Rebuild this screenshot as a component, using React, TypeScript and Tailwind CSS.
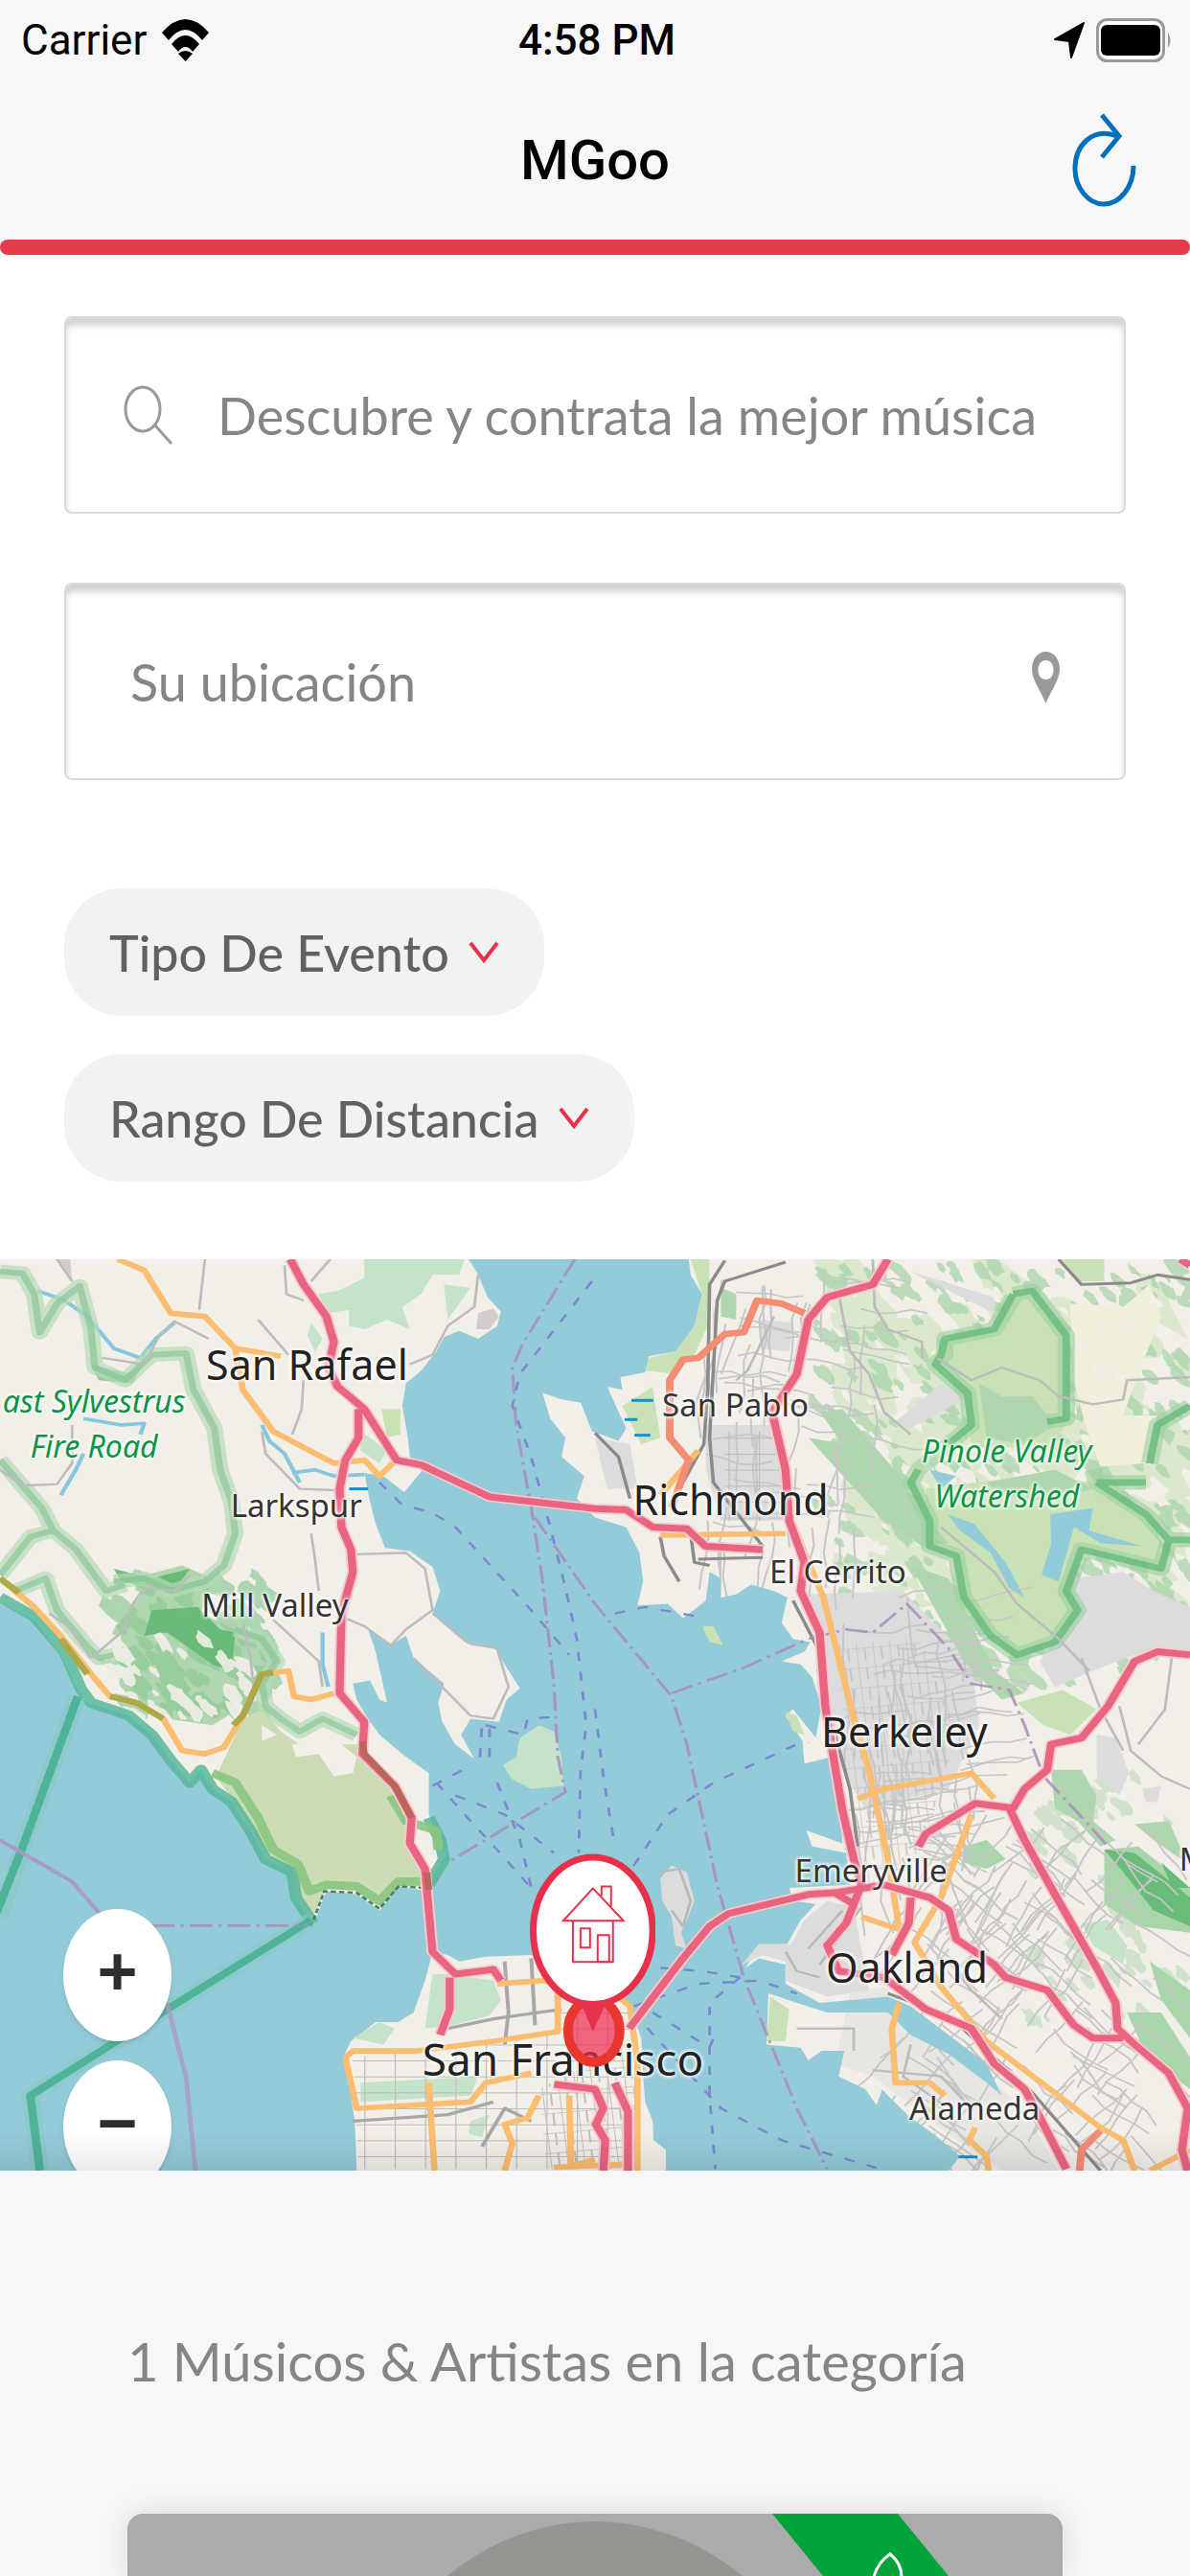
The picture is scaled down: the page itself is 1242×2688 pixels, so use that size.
import { useState } from 'react';

interface RoadSet {
    color: string;
    width: number;
    casing?: string;
    lines: string[];
}

interface PlaceLabel {
    text: string;
    left: string;
    top: string;
    size: 'capital' | 'city' | 'town' | 'park';
}

const WATER = '#94cbd9';
const LAND = '#f2efe9';

// Small deterministic generator so the terrain looks the same on every render
function makeRandom(seed: number) {
    let s = seed;
    return () => {
        s = (s * 16807) % 2147483647;
        return s / 2147483647;
    };
}

function makeBlotches(seed: number, count: number, x: number, y: number, w: number, h: number, size: number) {
    const rnd = makeRandom(seed);
    return Array.from({ length: count }, () => {
        const cx = x + rnd() * w;
        const cy = y + rnd() * h;
        const r = size * (0.4 + rnd());
        const points = Array.from({ length: 11 }, (_, i) => {
            const a = (i / 11) * Math.PI * 2;
            const d = r * (0.6 + rnd() * 0.6);
            const px = Math.cos(a) * d * 0.8;
            const py = Math.sin(a) * d * 1.2;
            return `${Math.round(cx + px + py * 0.5)},${Math.round(cy + py)}`;
        });
        return points.join(' ');
    });
}

// Streets mostly keep to two directions, tilt is the slant of the first one
function makeStreets(seed: number, count: number, x: number, y: number, w: number, h: number, tilt: number) {
    const rnd = makeRandom(seed);
    return Array.from({ length: count }, () => {
        let px = x + rnd() * w;
        let py = y + rnd() * h;
        const base = tilt + (rnd() > 0.5 ? Math.PI / 2 : 0);
        const points = [`${Math.round(px)},${Math.round(py)}`];
        for (let i = 0; i < 4; i++) {
            const a = base + (rnd() - 0.5) * 0.6;
            px += Math.cos(a) * 45;
            py += Math.sin(a) * 55;
            points.push(`${Math.round(px)},${Math.round(py)}`);
        }
        return points.join(' ');
    });
}

const BAY =
    '1235,41 1260,90 1285,160 1320,205 1310,250 1260,290 1210,265 1170,285 1150,330 1110,390 1070,430 1060,500 1075,600 1080,660 1115,700 1065,770 1010,720 960,710 975,800 990,870 1015,945 1080,955 1140,1005 1160,1080 1140,1150 1200,1215 1240,1250 1305,1260 1330,1310 1370,1385 1335,1420 1315,1490 1240,1480 1215,1530 1250,1605 1200,1560 1165,1490 1155,1430 1170,1370 1090,1290 1070,1220 1030,1250 970,1200 990,1270 1020,1430 1000,1420 975,1360 930,1370 940,1420 970,1480 1000,1530 1060,1590 1130,1650 1130,1780 1160,1860 1175,1910 1150,1950 1130,2020 1050,2005 1000,2080 940,2030 860,2020 825,2130 780,2040 770,1960 700,1920 660,1830 610,1740 560,1700 530,1640 500,1680 450,1610 400,1530 340,1470 230,1430 200,1380 160,1280 90,1170 0,1120 0,2895 940,2895 935,2740 908,2530 925,2490 990,2430 1050,2430 1090,2400 1120,2300 1140,2210 1180,2220 1210,2240 1280,2225 1400,2220 1500,2260 1600,2330 1660,2380 1690,2480 1695,2600 1700,2680 1720,2740 1722,2800 1755,2830 1755,2895 2500,2895 2530,2850 2460,2780 2400,2730 2340,2660 2325,2640 2310,2690 2280,2640 2210,2600 2225,2520 2165,2520 2130,2550 2110,2510 2020,2500 2025,2340 2100,2370 2180,2400 2340,2400 2400,2470 2500,2530 2600,2620 2640,2660 2600,2560 2500,2470 2400,2380 2340,2350 2160,2370 2070,2310 2070,2250 2000,2230 1965,2260 2000,2190 2075,2185 2110,2110 2150,2060 2090,2050 2080,2010 2240,2000 2230,1900 2140,1880 2125,1830 2220,1870 2210,1700 2190,1600 2120,1620 2115,1550 2070,1470 2090,1450 2150,1540 2165,1440 2140,1350 2110,1310 2060,1300 2120,1270 2135,1240 2090,1230 2060,1180 2075,1100 2040,1080 1980,1060 1940,1090 1900,1100 1900,1040 1870,1020 1860,1110 1800,1165 1760,1120 1680,1125 1695,1050 1685,960 1650,880 1568,850 1520,790 1540,720 1480,660 1490,600 1450,540 1430,460 1480,480 1530,490 1560,580 1630,610 1650,570 1600,440 1640,450 1635,410 1700,395 1710,345 1780,330 1830,250 1850,150 1820,90 1815,41';

const WATERWAYS = [
    '100,140 170,170 230,220 300,320 370,350 410,290 460,240',
    '220,540 320,560 380,555 370,590',
    '160,780 200,700 220,650',
    '770,710 830,700 880,720 960,715',
    '690,560 710,610 750,650 790,740',
    '850,1210 850,1310 865,1380',
];

const PARK_EDGES = [
    '0,80 60,85 90,150 105,270 150,180 210,125 240,260 250,380 330,420 400,340 490,335 510,450 565,570 580,700 610,800 620,900 590,1000 540,1050 450,1080 380,1040 300,1050',
    '0,670 110,820 140,890 200,950 280,1080 330,1060',
    '0,1030 80,910 140,890',
    '40,1080 120,1040 150,1140 220,1240 260,1290 300,1280',
    '620,1200 690,1230 730,1300 690,1370 700,1440 740,1480 790,1520 850,1480 940,1530',
];

const STREETS = [
    '540,41 525,200', '150,41 190,110', '680,230 760,340', '750,60 755,150 800,170', '870,41 820,110',
    '1260,90 1250,190 1180,250 1140,340 1080,370', '800,420 795,510 770,590', '270,350 380,370 420,280 460,235 550,290',
    '690,580 700,650 790,760 900,765', '0,700 60,750 150,745 190,680 190,560', '820,900 830,980 840,1080', '940,965 1070,960 1120,1010 1140,1140 1070,1200 1030,1250 960,1190 900,1160',
    '1140,1150 1230,1240 1310,1260 1340,1380 1300,1480 1240,1470 1090,1290', '640,1180 660,1290 670,1400', '720,1170 840,1300 850,1380',
    '240,1290 320,1210 350,1120 380,1070 460,1080 500,1030', '130,1150 180,1190 240,1290',
    '2300,41 2305,190 2340,260 2430,300 2430,350', '2210,150 2240,330 2290,400 2330,520 2400,590', '2040,220 1970,390 1940,420', '2470,350 2560,420 2640,380 2740,420 2790,470 2880,495 2960,480 2970,420 3136,410',
    '2480,880 2620,1020 2680,1120 2790,1230 2870,1330', '2850,1290 2900,1450 2960,1580', '3090,1270 3070,1450 3000,1560', '2950,1440 2980,1580 3060,1660 3136,1700',
    '2500,2240 2560,2330 2640,2420', '2400,2500 2380,2600 2500,2700', '2100,2450 2250,2450 2250,2520', '2300,2580 2480,2600 2560,2700',
];

const FERRIES = [
    '1560,110 1370,400 1350,500 1400,660 1450,880 1490,1070 1520,1230 1545,1500 1530,1640 1525,1900',
    '1000,740 1060,810 1140,835 1200,880 1300,1010 1400,1140 1500,1280',
    '1280,1500 1380,1530 1390,1480 1450,1475', '1265,1600 1270,1500', '1290,1600 1290,1500',
    '1140,1690 1220,1640', '1150,1680 1240,1800 1310,1890 1400,2010', '1200,1720 1330,1780 1460,1900', '1310,1680 1370,1860 1400,2010',
    '1568,1450 1590,1660 1620,1880', '1670,1940 1760,1780 1880,1680 2100,1560 2130,1555', '1630,2350 1900,2700 2060,2800 2320,2890',
    '1670,2380 1840,2310 2000,2300 2100,2340', '1720,2400 1870,2510 1880,2480', '1950,2290 1870,2370 1870,2660 1885,2890', '1740,2260 1850,2270 1950,2290', '1620,1150 1700,1130 1840,1160',
];

const BORDERS = [
    '1515,41 1380,300 1350,380 1360,560 1400,820 1430,1050 1460,1380 1470,1600 1490,1710 1180,1930',
    '1410,850 1568,1120 1770,1410 1810,1560 1890,2000 1960,2290 2100,2700 2180,2890',
    '1770,1400 1960,1320 2130,1230 2230,1200 2300,1210 2390,1120 2500,1260 2560,1370 2660,1390 2700,1500 2750,1660 2860,1800 2920,1880',
    '0,1860 190,1990 270,2100', '400,2128 810,2128',
];

const ROADS: RoadSet[] = [
    {
        color: '#fbbd6f',
        width: 17,
        lines: [
            '310,41 380,75 450,210 540,220 620,320 740,345',
            '620,320 640,450 720,580 880,680 960,670 1000,720 1035,680',
            '0,1040 90,1130 160,1220 240,1340 290,1410 360,1430 430,1480 480,1580 540,1590 590,1570 640,1470 690,1340 760,1330 775,1410 820,1420 880,1400',
            '1740,905 2070,900', '2080,840 2120,960 2170,1100 2250,1480 2290,1640 2340,1920 2370,2140 2270,2100',
            '2260,1730 2330,1700 2560,1650 2620,1730', '2560,1780 2480,2040 2410,2180 2480,2320 2600,2490 2900,2760 2960,2800 2990,2895',
            '2370,2370 2350,2450 2360,2620 2450,2620 2490,2660', '2570,2760 2555,2800 2600,2850 2605,2895', '3136,2830 3030,2895',
            '910,2540 930,2520 1100,2520 1300,2490 1470,2460 1470,2300', '910,2540 940,2700 1240,2680 1280,2620 1400,2590', '1130,2620 1145,2895',
            '1420,2660 1390,2730 1330,2750 1350,2810 1330,2895', '1310,2310 1430,2300 1600,2320 1660,2380 1680,2560 1680,2895', '1500,2660 1505,2880 1568,2860', '1460,2885 1640,2875', '1840,640 1740,780',
        ],
    },
    {
        color: '#f58c74',
        width: 20,
        lines: ['2120,210 2060,180 1995,170 1960,270 1910,275 1840,350 1800,355 1765,420 1765,600 1815,670 1770,820', '2900,2770 2850,2830 2845,2895'],
    },
    {
        color: '#e9647f',
        width: 21,
        casing: '#f7c9d0',
        lines: [
            '765,41 800,120 860,220 880,300 865,380 890,440 960,510 1045,670 1110,685 1290,785 1568,822 1650,826 1720,880 1810,885 1860,940 2010,950',
            '945,510 945,600 910,670 895,760 900,880 925,950 930,1020 900,1150 895,1400 960,1490 955,1590 1040,1690 1085,1790 1080,1870 1120,1950 1130,2080 1140,2210 1200,2280 1300,2265 1320,2300',
            '1185,2290 1185,2390 1160,2470',
            '2340,41 2300,120 2180,160 2130,230 2100,400 2035,520 2070,700 2080,860 2120,990 2110,1080 2160,1210 2175,1440 2195,1590 2220,1765 2250,1920 2270,2000 2230,2120 2180,2190 2210,2270 2330,2290 2440,2390 2560,2450 2620,2560 2700,2640 2750,2750 2810,2890',
            '1658,2450 1800,2230 1870,2130 1920,2090 2130,2030 2200,2025 2250,2060', '2200,2025 2330,2000 2450,2040 2500,2080 2520,2170 2620,2250 2650,2290 2760,2330 2830,2440 2880,2480 2960,2480',
            '2420,1880 2440,1840 2570,1745 2670,1760 2700,1700 2760,1640 2770,1560 2850,1540 2920,1440 2990,1300 3050,1270 3136,1280',
            '2660,1760 2700,1860 2780,2030 2900,2280 2940,2370 2945,2450 2990,2500 3080,2590 3130,2700 3115,2830 3130,2895',
            '2400,2040 2395,2120 2350,2220', '1460,2625 1568,2640 1590,2700 1570,2750 1595,2800 1590,2895', '1620,2620 1655,2710 1655,2895',
            '3110,41 3136,60',
        ],
    },
];

const RAILS = [
    '1910,45 1870,120 1865,450 1855,620 1800,740', '2070,50 1910,110 1890,170 1870,600 1880,740 2010,940', '1568,585 1630,660 1660,790', '1840,980 2010,975', '1740,910 1750,970 1790,1050',
    '2090,1110 2160,1270 2180,1440 2240,1700 2260,1880', '2340,2340 2500,2410 2620,2540 2720,2650 2900,2895', '2790,41 2850,120 2980,115 3050,90 3136,105', '1820,900 1830,990 1870,1000',
];

const LABELS: PlaceLabel[] = [
    { text: 'San Francisco', left: 'left-[47.3%]', top: 'top-[87.7%]', size: 'capital' },
    { text: 'San Rafael', left: 'left-[25.8%]', top: 'top-[11.6%]', size: 'city' },
    { text: 'Richmond', left: 'left-[61.4%]', top: 'top-[26.4%]', size: 'city' },
    { text: 'Berkeley', left: 'left-[76%]', top: 'top-[51.8%]', size: 'city' },
    { text: 'Oakland', left: 'left-[76.2%]', top: 'top-[77.7%]', size: 'city' },
    { text: 'San Pablo', left: 'left-[61.8%]', top: 'top-[16%]', size: 'town' },
    { text: 'Larkspur', left: 'left-[24.9%]', top: 'top-[27%]', size: 'town' },
    { text: 'Mill Valley', left: 'left-[23.1%]', top: 'top-[38%]', size: 'town' },
    { text: 'El Cerrito', left: 'left-[70.4%]', top: 'top-[34.3%]', size: 'town' },
    { text: 'Emeryville', left: 'left-[73.2%]', top: 'top-[67.1%]', size: 'town' },
    { text: 'Alameda', left: 'left-[81.9%]', top: 'top-[93.2%]', size: 'town' },
    { text: 'M', left: 'left-[100.3%]', top: 'top-[65.8%]', size: 'town' },
    { text: 'ast Sylvestrus Fire Road', left: 'left-[7.9%]', top: 'top-[18%]', size: 'park' },
    { text: 'Pinole Valley Watershed', left: 'left-[84.6%]', top: 'top-[23.4%]', size: 'park' },
];

const LABEL_STYLES = {
    capital: 'text-[46px] leading-[48px] whitespace-nowrap text-[#222]',
    city: 'text-[43px] leading-[48px] whitespace-nowrap text-[#222]',
    town: 'text-[33px] leading-[40px] whitespace-nowrap text-[#333]',
    park: 'w-[210px] text-center text-[32px] leading-[47px] italic text-[#0b9444]',
};

const FORESTS = makeBlotches(71, 420, 2150, 60, 986, 1300, 24);
const MEADOWS = makeBlotches(23, 110, 2200, 60, 920, 1150, 70);
const CLEARINGS = makeBlotches(5, 130, 2180, 60, 950, 1200, 18);
const HILLS = makeBlotches(91, 60, 2720, 1640, 416, 800, 24);
const MARIN = makeBlotches(17, 90, 300, 1040, 420, 420, 30);
const MARIN_CLEARINGS = makeBlotches(37, 36, 280, 1220, 380, 260, 24);
const BERKELEY_STREETS = makeStreets(11, 90, 2220, 1100, 340, 850, -0.1);
const OAKLAND_STREETS = makeStreets(29, 150, 2360, 1780, 680, 1080, 0.7);
const RICHMOND_STREETS = makeStreets(43, 70, 1860, 60, 460, 900, 0.1);

function Lines({ lines, color, width, dash, opacity }: { lines: string[]; color: string; width: number; dash?: string; opacity?: number }) {
    return (
        <g fill="none" stroke={color} strokeWidth={width} strokeDasharray={dash} opacity={opacity} strokeLinejoin="round">
            {lines.map(points => (
                <polyline key={points} points={points} />
            ))}
        </g>
    );
}

function Shapes({ shapes, color, opacity }: { shapes: string[]; color: string; opacity?: number }) {
    return (
        <g fill={color} opacity={opacity}>
            {shapes.map(points => (
                <polygon key={points} points={points} />
            ))}
        </g>
    );
}

function BayMap() {
    return (
        <svg viewBox="0 41 3136 2854" preserveAspectRatio="none" className="block h-full w-full" aria-hidden="true">
            <defs>
                <pattern id="grid" width="44" height="62" patternUnits="userSpaceOnUse" patternTransform="rotate(-6)">
                    <path d="M0 0H44M0 0V62M22 0V40" fill="none" stroke="#bdbdbd" strokeWidth="5" />
                </pattern>
                <pattern id="blocks" width="80" height="50" patternUnits="userSpaceOnUse">
                    <path d="M0 0H80M0 0V50" fill="none" stroke="#bbb" strokeWidth="6" />
                </pattern>
            </defs>
            <rect y="41" width="3136" height="2854" fill={LAND} />

            {/* Marin */}
            <Shapes
                color="#c5e3c8"
                shapes={[
                    '960,41 1225,41 1210,90 1140,90 1110,150 1060,190 1080,260 1020,230 960,260 920,250 920,200 860,210 840,150 890,140 960,100',
                    '1170,120 1240,130 1180,230',
                    '950,580 1020,640 1000,680 950,640',
                    '820,240 850,290 830,330 810,280',
                ]}
            />
            <Shapes color="#c8e2b2" shapes={['1005,510 1055,510 1055,590 1020,600']} />
            <Shapes color="#d3cccc" shapes={['1260,210 1300,195 1315,220 1290,260 1255,260', '150,41 185,41 190,110']} />
            <Shapes color="#afd6ae" shapes={['300,1020 350,1040 480,1000 560,1040 530,1150 620,1200 700,1220 740,1290 680,1340 640,1440 560,1500 440,1480 380,1420 260,1300 300,1200 380,1080']} />
            <Shapes color="#8fcb98" opacity={0.7} shapes={MARIN} />
            <Shapes color="#63b873" opacity={0.9} shapes={['400,1140 520,1130 580,1200 620,1210 610,1330 560,1310 440,1210 380,1220', '300,1010 400,1040 500,1010 460,1080 320,1050']} />
            <Shapes color="#f2efe9" opacity={0.9} shapes={MARIN_CLEARINGS} />
            <Shapes color="#8fcb97" shapes={['240,370 340,400 380,360 350,430 260,420']} />
            <Shapes color="#cbdcb5" shapes={['640,1480 690,1450 740,1520 790,1560 870,1560 950,1560 1040,1700 1080,1800 1080,1880 1120,1960 1110,2005 1050,2005 1000,2070 940,2020 860,2010 825,2100 780,2040 760,1960 700,1900 640,1780 570,1660']} />
            <Shapes color={LAND} shapes={['770,1560 850,1545 900,1560 940,1600 930,1650 880,1660 840,1590 780,1600', '1105,1850 1140,1880 1120,1920 1095,1890', '690,1500 730,1530 690,1550']} />

            {/* East Bay */}
            <Shapes color="#cbe3b8" shapes={MEADOWS} opacity={0.55} />
            <Shapes color="#a9d5ab" shapes={FORESTS} opacity={0.75} />
            <Shapes color="#f1efdc" shapes={['2820,180 2960,190 3030,120 3060,220 3000,400 2960,530 3050,530 3020,680 2900,690 2860,560 2830,420']} />
            <Shapes color="#f2efe9" shapes={CLEARINGS} />
            <Shapes color="#dcdcdc" shapes={['1860,560 2060,560 2080,700 2080,860 1900,860 1860,700', '1568,600 1660,620 1680,760 1600,760', '2000,230 2090,240 2080,330 2010,320', '2130,1090 2380,1080 2560,1300 2580,1500 2500,1700 2280,1760 2200,1600', '2830,1040 2960,1020 3040,1080 3136,1130 3136,1270 2990,1280 2880,1330 2780,1380 2740,1300 2830,1150', '2480,430 2540,480 2400,570 2360,550', '2400,80 2620,160 2620,210 2450,110']} />
            <Shapes color="#c8e2b6" shapes={['1820,41 1870,41 1865,250 1830,340 1780,400 1700,390 1710,350 1780,330 1830,250 1850,150', '1640,500 1720,440 1740,600 1690,620', '2660,160 2700,140 2810,300 2810,560 2760,640 2560,620 2550,540 2550,460 2470,350 2490,290 2620,260', '2440,760 2700,720 2880,740 3050,860 3060,1000 2850,950 2800,1080 2840,1150 2780,1240 2680,1280 2560,1160 2520,960 2440,880', '2800,41 2910,41 2910,110 2840,110', '2680,1430 2800,1390 2890,1450 2820,1530 2750,1500']} />
            <Shapes color="#afd6ae" shapes={['1900,130 1940,150 1940,230 1900,220', '2580,430 2640,470 2720,470 2780,560 2700,620 2600,600', '2600,740 2780,700 2880,760 2760,800 2640,780', '2130,600 2230,620 2380,760 2500,930 2430,940 2330,860', '2160,520 2220,510 2400,760 2320,780', '2400,1000 2500,1040 2620,1330 2700,1400 2640,1420 2540,1300']} />
            <Shapes color="#f2efe9" shapes={['2840,1530 2900,1450 3000,1300 3136,1300 3136,1830 2980,1800 2880,1640']} />
            <Shapes color="#afd6ae" shapes={HILLS} opacity={0.5} />
            <Shapes color="#afd6ae" shapes={['2770,1640 2850,1640 2890,1720 2880,1800 2940,1860 2900,1880 2840,1800 2780,1760', '2990,1810 3080,1800 3110,1880 3136,1940 3040,1860']} />
            <Shapes color="#dcdcdc" shapes={['2890,1530 2940,1540 2975,1650 2950,1720 2890,1660', '3010,1700 3060,1690 3050,1740 3020,1740']} />
            <Shapes color="#a9d5ab" shapes={['2910,1890 3000,1880 3136,2010 3136,2150 3000,2130 2910,2060', '3030,2240 3136,2330 3136,2480 3060,2360', '2540,1880 2600,1860 2650,1920 2600,1950 2540,1930', '2970,2400 3060,2400 3136,2540 3136,2640 3020,2530']} />
            <Shapes color="#68bb78" shapes={['2910,1890 2990,1900 3136,2040 3136,2130 3040,2080 2960,1960', '3060,1930 3136,2010 3090,2010']} />
            <Shapes color="#c5e3c8" shapes={['2850,2120 2920,2110 2970,2190 2960,2250 2880,2190']} />

            <Shapes color="#d9d9d9" shapes={['2240,2340 2330,2320 2620,2620 2700,2700 2790,2895 2640,2895 2500,2780 2300,2600 2200,2560']} opacity={0.4} />
            <Lines lines={BERKELEY_STREETS} color="#c6c6c6" width={5} />
            <Lines lines={OAKLAND_STREETS} color="#c6c6c6" width={5} />
            <Lines lines={RICHMOND_STREETS} color="#c6c6c6" width={5} />
            <polygon points="2200,1250 2420,1230 2520,1500 2480,1700 2420,1900 2280,2000 2230,1640" fill="url(#grid)" opacity="0.7" />
            <polygon points="1910,580 2050,580 2070,860 1910,860" fill="url(#blocks)" />

            {/* Water */}
            <polygon points={BAY} fill={WATER} />
            <Shapes color={WATER} shapes={['2498,840 2568,870 2650,990 2700,1100 2660,1070 2610,960 2530,890', '2768,840 2880,820 2870,890 3010,940 2900,930 2830,880 2790,1050 2745,1030 2770,930', '2450,700 2520,720 2480,760']} />
            <Lines lines={WATERWAYS} color="#83c8df" width={11} />

            {/* Islands, docks and Alameda */}
            <Shapes color="#c5e3c8" shapes={['1420,1500 1460,1520 1480,1600 1485,1690 1400,1700 1350,1670 1325,1625 1360,1600 1370,1540']} />
            <Shapes color="#dcdcdc" shapes={['1740,1980 1770,1940 1810,1960 1830,2050 1810,2110 1795,2150 1810,2200 1780,2190 1770,2100 1745,2050', '1955,2250 2000,2185 2085,2185 2120,2110 2180,2050 2250,2070 2290,2330 2180,2350 2070,2300 2070,2240 2010,2220']} />
            <Shapes color="#c8e2b6" shapes={['1850,1190 1880,1190 1905,1250 1870,1240', '2030,2350 2080,2390 2070,2490 2020,2490', '2070,1460 2100,1470 2120,1530 2090,1520']} />
            <Lines lines={['1740,1960 1790,1950 1820,2050 1800,2130 1770,2080', '2220,2080 2130,2200', '2270,2070 2160,2250', '2070,2210 2100,2270 2160,2290']} color="#b8b8b8" width={7} />

            {/* San Francisco */}
            <Shapes color="#c5e3c8" shapes={['1140,2280 1180,2280 1300,2300 1320,2360 1290,2410 1190,2440 1120,2450', '930,2480 1000,2430 1040,2450 1010,2500', '950,2620 1260,2600 1240,2660 950,2680', '1240,2740 1290,2720 1270,2790 1235,2780']} />
            <polygon points="930,2540 1290,2500 1460,2470 1460,2320 1600,2340 1660,2400 1680,2890 945,2890" fill="url(#blocks)" />
            <polygon points="1420,2640 1660,2500 1690,2890 1440,2890" fill="url(#grid)" />
            <Lines lines={['930,2740 1180,2720 1300,2680', '1180,2450 1300,2420 1480,2390', '1330,2240 1340,2400 1330,2500', '1400,2230 1410,2440', '1270,2820 1330,2700 1400,2740']} color="#a8a8a8" width={10} />

            {/* Protected coast line */}
            <Lines lines={PARK_EDGES} color="#b5dbb8" width={44} opacity={0.7} />
            <Lines lines={PARK_EDGES} color="#83c393" width={18} opacity={0.6} />
            <Lines
                color="#57b79b"
                width={32}
                opacity={0.85}
                lines={['0,1100 90,1160 170,1270 215,1390 240,1430 340,1470 400,1530 450,1610 500,1680 530,1640 560,1700 610,1740 660,1830 700,1920 770,1960 780,2040 825,2120', '1130,2000 1170,1920 1160,1860 1130,1790']}
            />
            <Lines color="#8ac681" width={26} opacity={0.9} lines={['560,1650 620,1680 680,1790 720,1890 785,1935 815,2020 860,2000 940,2005 1000,2050 1050,1990 1110,1990', '1030,1720 1070,1800 1150,1830 1155,1890']} />
            <Lines color="#477f60" width={7} dash="14 8" lines={['820,2130 855,2020 940,2025 1000,2075 1050,2005 1130,2010']} />
            <Lines lines={['205,1410 60,1880 0,2100', '820,2110 440,2390 80,2660 105,2895']} color="#86c9c4" width={46} opacity={0.6} />
            <Lines lines={['205,1410 60,1880 -10,2090', '820,2110 440,2390 80,2660 105,2895']} color="#4fb397" width={22} />
            <Lines
                color="#9bd0a0"
                width={46}
                opacity={0.6}
                lines={['2670,160 2620,260 2490,290 2490,340 2465,370 2550,460 2560,560 2500,620 2420,700 2400,740 2450,860 2450,940 2520,970 2540,1100 2610,1220 2680,1280 2780,1240 2840,1140 2810,1080 2850,950 3060,1010 3080,920 3020,840 2890,740 2880,700', '2670,150 2720,140 2810,280 2810,540 2760,550', '3136,500 3050,560 3030,680', '2890,740 3020,740', '3080,920 3136,920']}
            />
            <Lines
                color="#6cbd7e"
                width={20}
                opacity={0.85}
                lines={['2670,150 2620,260 2490,290 2480,340 2465,370 2550,460 2560,560 2500,620', '2420,700 2400,740 2450,860 2450,940 2520,970 2540,1100 2610,1220 2680,1280 2780,1240 2840,1140 2810,1080 2850,950 3060,1010 3080,920 3020,840 2890,740', '2670,150 2720,140 2810,280 2810,540 2760,550', '3136,500 3050,560 3030,680', '2890,740 3020,740', '3080,920 3136,920']}
            />

            <Lines lines={STREETS} color="#bcbcbc" width={7} />
            <Lines lines={RAILS} color="#8b8b8b" width={9} />
            <Lines lines={FERRIES} color="#7a88d2" width={7} dash="28 34" />
            <Lines lines={BORDERS} color="#a98fb8" width={8} dash="60 16 8 16" opacity={0.85} />
            <Lines lines={['440,2370 490,2600 515,2895', '0,1860 190,1990 270,2100']} color="#a99bc0" width={12} opacity={0.8} />
            {ROADS.map(road => (
                <g key={road.color}>
                    {road.casing && <Lines lines={road.lines} color={road.casing} width={road.width + 10} />}
                    <Lines lines={road.lines} color={road.color} width={road.width} />
                </g>
            ))}
            <Lines lines={['0,1040 50,1085', '160,1230 230,1340', '290,1410 360,1430 430,1480', '615,1500 640,1470 690,1340 720,1335']} color="#ada94b" width={18} />
            <Lines lines={['955,1550 960,1590 1040,1690 1085,1790', '1125,1960 1130,2015']} color="#b9675c" width={18} />
            <Lines lines={['920,760 970,760', '1664,483 1722,483', '1646,543 1680,543', '1672,592 1714,592', '2526,2852 2576,2852']} color="#1292d6" width={9} />
        </svg>
    );
}

function HomeMarker() {
    return (
        <svg viewBox="0 0 132 225" className="h-full w-full" role="img" aria-label="Su ubicación">
            <ellipse cx="67" cy="185" rx="27" ry="33" fill="#f0294f" fillOpacity="0.7" stroke="#e8352e" strokeWidth="10" />
            <path d="M53 155h27L66 186z" fill="#e8304a" />
            <ellipse cx="66" cy="80.5" rx="62.5" ry="77" fill="#fff" stroke="#e8304a" strokeWidth="7" />
            <g fill="none" stroke="#e8304a" strokeWidth="2">
                <path d="M66 36 35 70h63z" />
                <path d="M75 44V34h10v21" />
                <path d="M45 70v43h42V70" />
                <rect x="53" y="78" width="10" height="20" />
                <rect x="71" y="85" width="12" height="28" />
            </g>
        </svg>
    );
}

function StatusBar() {
    return (
        <div className="grid h-[84px] grid-cols-[1fr_auto_1fr] items-center pr-[18px] pl-[22px] font-[Roboto,sans-serif] text-[44px] text-black">
            <div className="flex items-center gap-4">
                <span>Carrier</span>
                <svg viewBox="0 0 49 44" className="h-11 w-[49px]" aria-hidden="true">
                    <path d="M0 14Q24.500-14 49 14l-7 8Q24.500 0 7 22z" />
                    <path d="M10 26Q24.500 8 39 26l-7 8Q24.500 24 17 34z" />
                    <path d="M17 36Q24.500 30 32 36l-7.500 8z" />
                </svg>
            </div>
            <span className="text-center font-medium">4:58 PM</span>
            <div className="flex items-center justify-end gap-3">
                <svg viewBox="0 0 32 38" className="h-[38px] w-8" aria-hidden="true">
                    <path d="M31 1 18 37 16 20 1 18z" stroke="#000" strokeWidth="2" strokeLinejoin="round" />
                </svg>
                <svg viewBox="0 0 80 46" className="h-[46px] w-20" aria-hidden="true">
                    <rect x="1.500" y="1.500" width="69" height="43" rx="10" fill="#fff" stroke="#999" strokeWidth="3" />
                    <rect x="5" y="7" width="62" height="32" rx="6" />
                    <path d="M75 15q5 8 0 16z" fill="#999" />
                </svg>
            </div>
        </div>
    );
}

function FilterPill({ label }: { label: string }) {
    return (
        <label className="flex h-[133px] items-center gap-5 rounded-[60px] bg-[#f2f2f2] px-[47px]">
            <select aria-label={label} className="appearance-none bg-transparent text-[52px] font-medium text-[#616161] outline-none">
                <option>{label}</option>
            </select>
            <svg viewBox="0 0 32 24" className="h-6 w-8" fill="none" stroke="#e8304a" strokeWidth="4" aria-hidden="true">
                <path d="M2 2l14 18L30 2" />
            </svg>
        </label>
    );
}

const fieldClass = 'flex h-[206px] items-center rounded-lg border-2 border-[#dadada] bg-white shadow-[inset_0_8px_6px_#d4d4d4]';
const inputClass = 'min-w-0 flex-1 bg-transparent text-[54px] text-gray-700 outline-none placeholder:text-[#858585]';

export default function App() {
    const [query, setQuery] = useState('');
    const [location, setLocation] = useState('');

    return (
        <div className="flex min-h-screen flex-col bg-white font-['Lato',sans-serif]">
            {/* Header */}
            <header className="bg-[#f8f7f8]">
                <StatusBar />
                <div className="grid h-[166px] grid-cols-[1fr_auto_1fr] items-center px-[52px]">
                    <span />
                    <h1 className="font-[Roboto,sans-serif] text-[58px] font-medium text-black">MGoo</h1>
                    <button aria-label="Recargar" className="justify-self-end">
                        <svg viewBox="0 0 74 102" className="h-[102px] w-[74px]" fill="none" stroke="#0070bd" strokeWidth="5">
                            <path d="M50 26C24 16 6 36 6 60c0 20 14 37 30 37s31-17 31-40" />
                            <path d="M34 4l18 22-18 22" />
                        </svg>
                    </button>
                </div>
                <div className="h-4 rounded-full bg-[#e83a4a]" />
            </header>

            {/* Search form */}
            <form className="flex flex-col gap-[72px] px-[67px] pt-16" onSubmit={e => e.preventDefault()}>
                <label className={`${fieldClass} gap-[46px] pr-10 pl-[60px]`}>
                    <svg viewBox="0 0 52 62" className="h-[62px] w-[52px]" fill="none" stroke="#999" strokeWidth="3" aria-hidden="true">
                        <ellipse cx="20" cy="25" rx="18" ry="23" />
                        <path d="M33 42l17 19" />
                    </svg>
                    <input
                        value={query}
                        onChange={e => setQuery(e.target.value)}
                        placeholder="Descubre y contrata la mejor música"
                        aria-label="Descubre y contrata la mejor música"
                        className={inputClass}
                    />
                </label>
                <label className={`${fieldClass} px-[67px]`}>
                    <input
                        value={location}
                        onChange={e => setLocation(e.target.value)}
                        placeholder="Su ubicación"
                        aria-label="Su ubicación"
                        className={inputClass}
                    />
                    <svg viewBox="0 0 29 54" className="mb-2 h-[54px] w-[29px]" fill="#999" aria-hidden="true">
                        <path fillRule="evenodd" d="M14.500 0C6 0 0 8 0 18c0 12 10 24 14.500 36C19 42 29 30 29 18 29 8 23 0 14.500 0zm0 9c5 0 8 4 8 10s-3 10-8 10-8-4-8-10 3-10 8-10z" />
                    </svg>
                </label>
            </form>

            {/* Filters */}
            <div className="flex flex-col items-start gap-10 px-[67px] pt-[113px] pb-[81px]">
                <FilterPill label="Tipo De Evento" />
                <FilterPill label="Rango De Distancia" />
            </div>

            {/* Map */}
            <section className="relative aspect-[1242/951] w-full overflow-hidden" aria-label="Mapa">
                <BayMap />
                {LABELS.map(label => (
                    <span
                        key={label.text}
                        className={`absolute -translate-x-1/2 -translate-y-1/2 font-['Noto_Sans',sans-serif] [text-shadow:0_0_4px_#fff,0_0_4px_#fff,0_0_4px_#fff] ${label.left} ${label.top} ${LABEL_STYLES[label.size]}`}
                    >
                        {label.text}
                    </span>
                ))}
                <div className="absolute top-[65.2%] left-[44.5%] h-[23.7%] w-[10.6%]">
                    <HomeMarker />
                </div>
                <div className="absolute top-[71.3%] left-[66px] flex flex-col gap-5">
                    {['+', '−'].map(sign => (
                        <button
                            key={sign}
                            aria-label={sign === '+' ? 'Acercar' : 'Alejar'}
                            className="flex h-[138px] w-[113px] items-center justify-center rounded-[50%] bg-white pb-2 font-['Liberation_Sans',sans-serif] text-[72px] font-bold text-[#2e2e2e] shadow-md"
                        >
                            {sign}
                        </button>
                    ))}
                </div>
                <div className="pointer-events-none absolute inset-x-0 bottom-0 h-10 bg-linear-to-t from-black/8 to-transparent" />
            </section>

            {/* Results */}
            <section className="flex flex-1 flex-col bg-[#f7f7f7] px-[133px] pt-[163px]">
                <h2 className="text-[56px] leading-[72px] text-[#858585]">1 Músicos &amp; Artistas en la categoría</h2>
                <article className="relative mt-[123px] min-h-16 flex-1 overflow-hidden rounded-t-2xl bg-[#ababab] shadow-[0_0_30px_rgba(0,0,0,0.12)]">
                    <div className="absolute top-2 left-1/2 h-[690px] w-[560px] -translate-x-1/2 rounded-[50%] bg-[#979592]" />
                    <svg viewBox="0 0 184 65" className="absolute top-0 left-[69%] h-[65px] w-[184px]" aria-hidden="true">
                        <path d="M0 0h131l53 65H53z" fill="#03a33b" />
                        <path d="M106 66q4-15 17-24 12 10 12 24" fill="none" stroke="#fff" strokeWidth="3" />
                    </svg>
                </article>
            </section>
        </div>
    );
}
